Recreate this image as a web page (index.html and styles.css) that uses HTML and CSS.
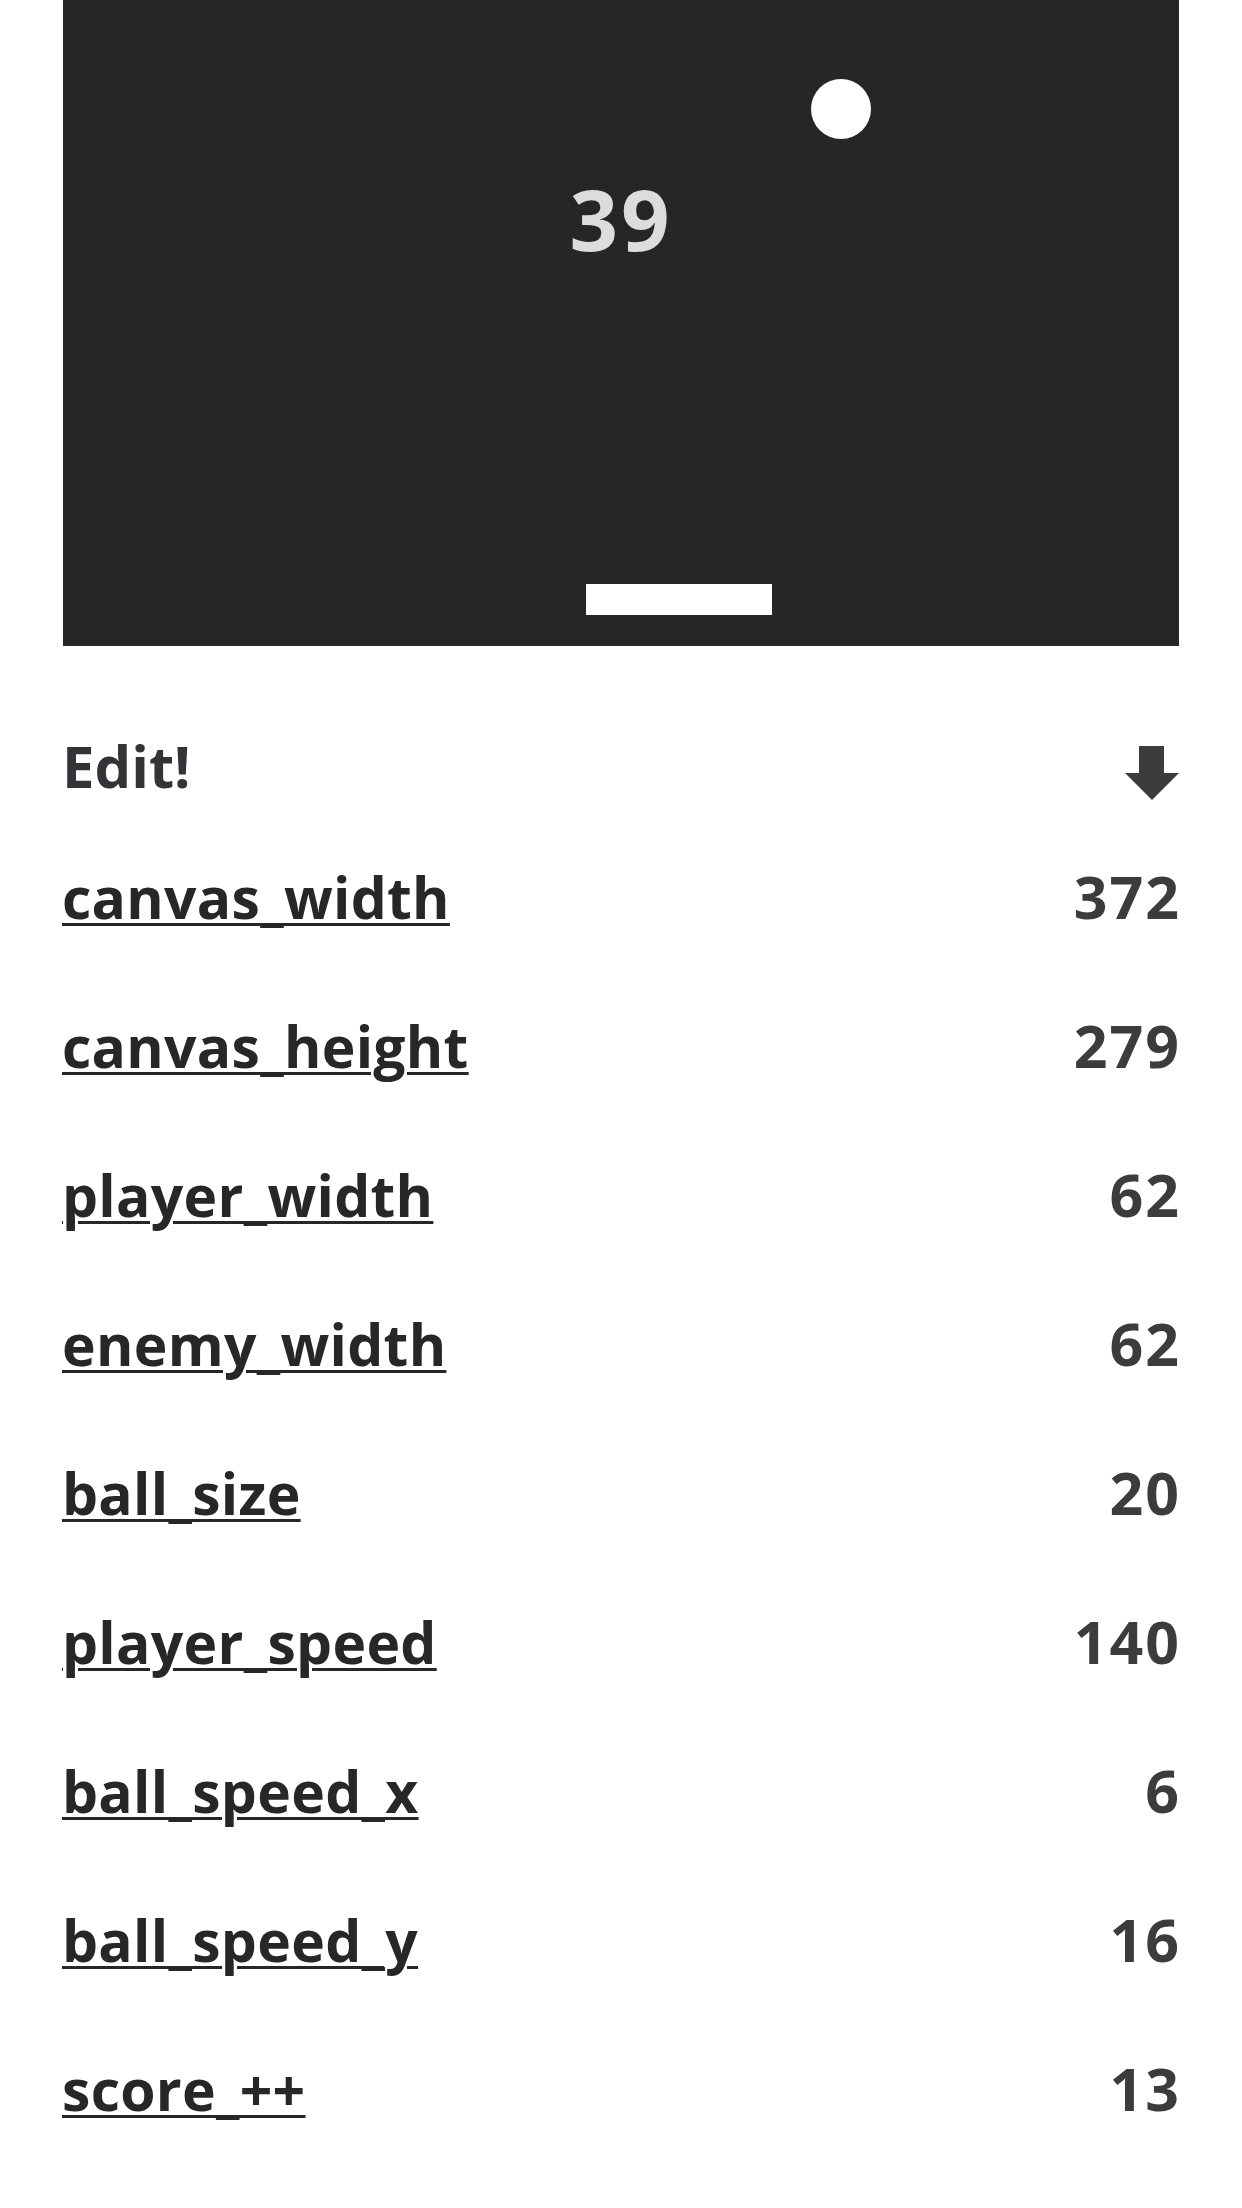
FILE: index.html
```html
<!DOCTYPE html>
<html lang="en">
<head>
  <meta charset="UTF-8">
  <meta name="viewport" content="width=device-width, initial-scale=1.0">
  <title>Pong</title>
  <link rel="stylesheet" href="styles.css">
</head>
<body>
  <div class="game">
    <div class="score">39</div>
    <div class="ball"></div>
    <div class="paddle"></div>
  </div>

  <div class="edit-head">
    <h2>Edit!</h2>
    <svg class="arrow" width="54" height="54" viewBox="0 0 54 54">
      <rect x="14" y="0" width="25" height="28" fill="#3b3c3e"/>
      <polygon points="0,27 54,27 27,54" fill="#3b3c3e"/>
    </svg>
  </div>

  <ul class="params">
    <li class="param"><a href="#">canvas_width</a><span class="value">372</span></li>
    <li class="param"><a href="#">canvas_height</a><span class="value">279</span></li>
    <li class="param"><a href="#">player_width</a><span class="value">62</span></li>
    <li class="param"><a href="#">enemy_width</a><span class="value">62</span></li>
    <li class="param"><a href="#">ball_size</a><span class="value">20</span></li>
    <li class="param"><a href="#">player_speed</a><span class="value">140</span></li>
    <li class="param"><a href="#">ball_speed_x</a><span class="value">6</span></li>
    <li class="param"><a href="#">ball_speed_y</a><span class="value">16</span></li>
    <li class="param"><a href="#">score_++</a><span class="value">13</span></li>
  </ul>
</body>
</html>
```

FILE: styles.css
```css
/* General Styles */
body {
  font-family: 'Open Sans', 'Liberation Sans', sans-serif;
  background: #fff;
  margin: 0;
  padding: 0 63px;
  color: #262729;
}

/* Game canvas */
.game {
  position: relative;
  height: 646px;
  background: #252628;
  overflow: hidden;
}

.score {
  position: absolute;
  top: 176px;
  left: 0;
  right: 0;
  text-align: center;
  font-size: 85px;
  line-height: 85px;
  font-weight: 700;
  letter-spacing: 3px;
  color: #dcdcdc;
}

.ball {
  position: absolute;
  left: 748px;
  top: 79px;
  width: 60px;
  height: 60px;
  border-radius: 50%;
  background: #fff;
}

.paddle {
  position: absolute;
  left: 523px;
  top: 584px;
  width: 186px;
  height: 31px;
  background: #fff;
}

/* Edit header */
.edit-head {
  display: flex;
  justify-content: space-between;
  align-items: center;
  height: 80px;
  margin-top: 80px;
}

.edit-head h2 {
  margin: 0 0 0 -1px;
  font-size: 58px;
  line-height: 80px;
  font-weight: 700;
  color: #333437;
}

.arrow {
  display: block;
  margin-top: 14px;
}

/* Parameter list */
.params {
  list-style: none;
  margin: 16px 0 0;
  padding: 0;
}

.param {
  display: flex;
  justify-content: space-between;
  align-items: baseline;
  height: 149px;
  line-height: 149px;
}

.param a {
  margin-left: -1px;
  font-size: 57px;
  font-weight: 700;
  letter-spacing: 0.3px;
  color: #262729;
  text-decoration: underline;
  text-decoration-thickness: 3px;
  text-underline-offset: 4px;
}

.value {
  margin-right: -2px;
  font-size: 59px;
  font-weight: 700;
  letter-spacing: 2px;
  color: #3b3c3e;
}
```
